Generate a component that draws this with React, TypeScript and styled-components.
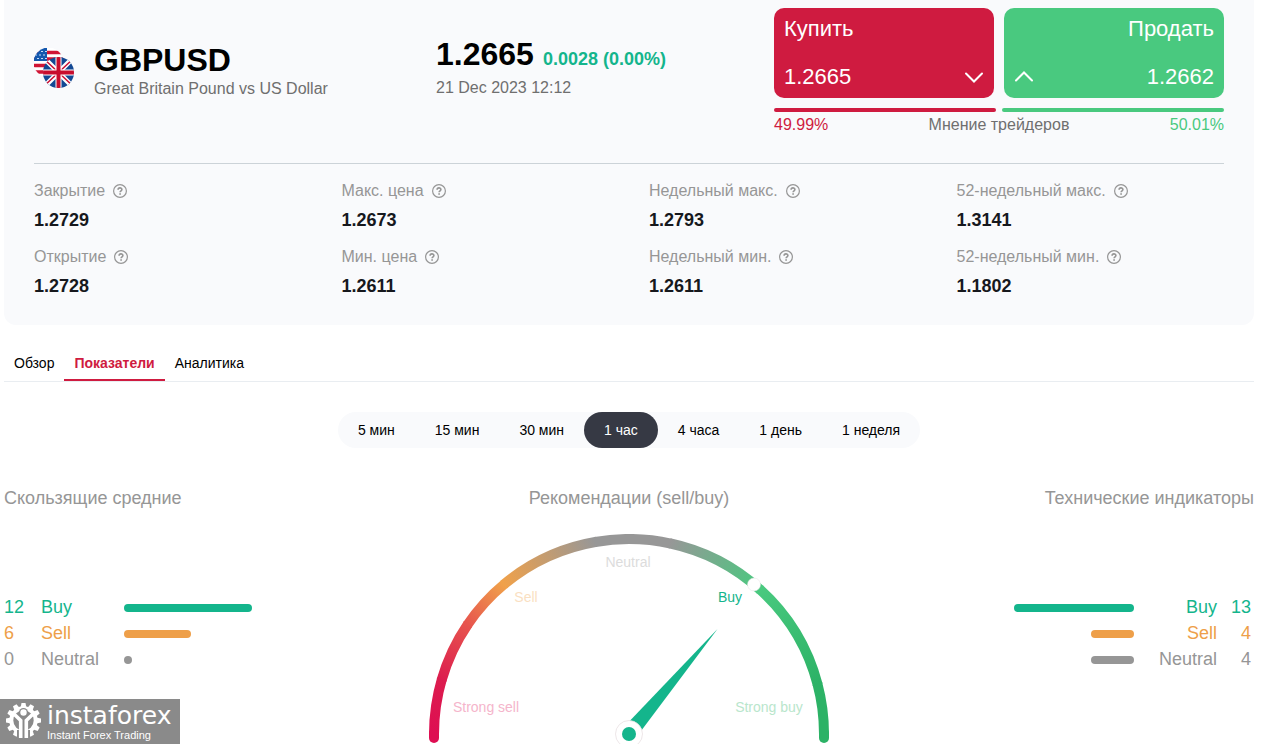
import React, { useState } from "react";
import styled, { createGlobalStyle } from "styled-components";

const color = {
  red: "#cf1b40",
  green: "#49c97f",
  teal: "#14b58c",
  orange: "#ee9f49",
  grey: "#969696",
  text: "#6f6f6f",
  panel: "#f9fafc",
  dark: "#363944",
};

const GlobalStyle = createGlobalStyle`
  * { box-sizing: border-box; }
  body {
    margin: 0;
    background: #fff;
    color: #000;
    font-family: "Liberation Sans", Arial, sans-serif;
    font-size: 16px;
    line-height: 20px;
  }
  button { font: inherit; color: inherit; background: none; border: 0; padding: 0; cursor: pointer; }
  h1, h2, p, dl, dd { margin: 0; font-weight: 400; }
`;

const Page = styled.main`
  padding: 0 8px 0 4px;
`;

const Card = styled.section`
  padding: 8px 30px 28px;
  background: ${color.panel};
  border-radius: 0 0 12px 12px;
`;

const Header = styled.header`
  display: grid;
  grid-template-columns: 402px 1fr 450px;
  padding-bottom: 28px;
  border-bottom: 1px solid #ccd3d8;
`;

const Instrument = styled.div`
  display: flex;
  gap: 20px;
  padding-top: 34px;
`;

const FlagPair = styled.svg`
  width: 40px;
  height: 40px;
  margin-top: 6px;
`;

const Symbol = styled.h1`
  margin-bottom: 1px;
  font-size: 32px;
  line-height: 36px;
  font-weight: 700;
`;

const Muted = styled.p`
  color: ${color.text};
`;

const Quote = styled.div`
  padding-top: 28px;
`;

const PriceLine = styled.div`
  display: flex;
  align-items: baseline;
  gap: 9px;
  margin-bottom: 6px;
`;

const Price = styled.strong`
  font-size: 32px;
  line-height: 36px;
`;

const Change = styled.strong`
  font-size: 18px;
  color: ${color.teal};
`;

const DealButtons = styled.div`
  display: grid;
  grid-template-columns: 1fr 1fr;
  gap: 10px;
`;

const DealButton = styled.button<{ $sell?: boolean }>`
  display: flex;
  flex-direction: column;
  justify-content: space-between;
  align-items: ${(p) => (p.$sell ? "flex-end" : "flex-start")};
  height: 90px;
  padding: 8px 10px;
  border-radius: 10px;
  background: ${(p) => (p.$sell ? color.green : color.red)};
  color: #fff;
  font-size: 22px;
  line-height: 26px;
`;

const DealRow = styled.span`
  display: flex;
  width: 100%;
  justify-content: space-between;
  align-items: center;
`;

const Chevron = styled.svg`
  width: 20px;
  height: 12px;
  fill: none;
  stroke: #fff;
  stroke-width: 2;
  stroke-linecap: round;
`;

const OpinionBars = styled.div`
  display: flex;
  gap: 6px;
  margin: 10px 0 3px;
`;

const OpinionBar = styled.span<{ $share: number; $tone: string }>`
  flex: ${(p) => p.$share} 1 0;
  height: 4px;
  border-radius: 2px;
  background: ${(p) => p.$tone};
`;

const OpinionText = styled.div`
  display: flex;
  justify-content: space-between;
  color: ${color.text};
`;

const Tone = styled.span<{ $tone: string }>`
  color: ${(p) => p.$tone};
`;

const Stats = styled.dl`
  display: grid;
  grid-template-columns: repeat(4, 1fr);
  gap: 16px 40px;
  padding-top: 17px;
`;

const StatLabel = styled.dt`
  display: flex;
  align-items: center;
  gap: 8px;
  margin-bottom: 8px;
  color: ${color.grey};
`;

const StatValue = styled.dd`
  font-size: 18px;
  line-height: 22px;
  font-weight: 700;
  color: #16181d;
`;

const HintButton = styled.button`
  display: flex;
`;

const Tabs = styled.nav`
  display: flex;
  margin-top: 21px;
  border-bottom: 1px solid #e9edf1;
`;

const Tab = styled.button<{ $active: boolean }>`
  height: 35px;
  padding: 0 10px;
  border-bottom: 2px solid ${(p) => (p.$active ? color.red : "transparent")};
  color: ${(p) => (p.$active ? color.red : "#000")};
  font-size: 14px;
  font-weight: ${(p) => (p.$active ? 700 : 400)};
`;

const Periods = styled.div`
  display: flex;
  width: fit-content;
  margin: 30px auto 38px;
  border-radius: 18px;
  background: ${color.panel};
`;

const Period = styled.button<{ $active: boolean }>`
  height: 36px;
  padding: 0 20px;
  border-radius: 18px;
  background: ${(p) => (p.$active ? color.dark : "transparent")};
  color: ${(p) => (p.$active ? "#fff" : "#000")};
  font-size: 14px;
`;

const Indicators = styled.div`
  display: grid;
  grid-template-columns: 1fr 400px 1fr;
`;

const Column = styled.section<{ $align: "start" | "center" | "end" }>`
  display: flex;
  flex-direction: column;
  align-items: ${(p) => p.$align};
`;

const Heading = styled.h2`
  font-size: 18px;
  line-height: 24px;
  color: ${color.grey};
`;

const SignalTable = styled.table`
  margin-top: 84px;
  border-collapse: collapse;
  font-size: 18px;
  line-height: 26px;
`;

const SignalRow = styled.tr<{ $tone: string }>`
  color: ${(p) => p.$tone};
`;

const Cell = styled.td<{ $width: number; $right?: boolean }>`
  width: ${(p) => p.$width}px;
  padding: 0;
  text-align: ${(p) => (p.$right ? "right" : "left")};
`;

const EndCell = styled(Cell)`
  padding-right: 3px;
`;

const SignalBar = styled.span`
  display: block;
  height: 8px;
  margin-top: 2px;
  border-radius: 4px;
  background: currentColor;
`;

const RightBar = styled(SignalBar)`
  margin-left: auto;
`;

const Gauge = styled.svg`
  display: block;
  width: 400px;
  height: 210px;
  margin-top: 24px;
  font-size: 14px;
  text-anchor: middle;
`;

const Brand = styled.a`
  position: fixed;
  left: 0;
  bottom: 0;
  display: flex;
  gap: 6px;
  width: 180px;
  height: 45px;
  padding: 4px 0 0 6px;
  background: #8a8a8a;
  color: #fff;
  text-decoration: none;
`;

const BrandName = styled.span`
  display: block;
  font-family: "DejaVu Sans", sans-serif;
  font-size: 25px;
  line-height: 26px;
`;

const BrandLine = styled.span`
  display: block;
  font-size: 11px;
  line-height: 12px;
`;

const STATS = [
  ["Закрытие", "1.2729"],
  ["Макс. цена", "1.2673"],
  ["Недельный макс.", "1.2793"],
  ["52-недельный макс.", "1.3141"],
  ["Открытие", "1.2728"],
  ["Мин. цена", "1.2611"],
  ["Недельный мин.", "1.2611"],
  ["52-недельный мин.", "1.1802"],
];

const TABS = ["Обзор", "Показатели", "Аналитика"];
const PERIODS = ["5 мин", "15 мин", "30 мин", "1 час", "4 часа", "1 день", "1 неделя"];

type Signal = { name: string; count: number; bar: number; tone: string };

const AVERAGES: Signal[] = [
  { name: "Buy", count: 12, bar: 128, tone: color.teal },
  { name: "Sell", count: 6, bar: 67, tone: color.orange },
  { name: "Neutral", count: 0, bar: 8, tone: color.grey },
];

const TECHNICAL: Signal[] = [
  { name: "Buy", count: 13, bar: 120, tone: color.teal },
  { name: "Sell", count: 4, bar: 43, tone: color.orange },
  { name: "Neutral", count: 4, bar: 43, tone: color.grey },
];

// Arc colours by angle, measured clockwise from the left end.
const STOPS: [number, string][] = [
  [0, "#de0e52"],
  [16, "#dc1c4e"],
  [34, "#e7544e"],
  [50, "#f0a14a"],
  [80, "#979797"],
  [102, "#979797"],
  [132, "#49c97f"],
  [165, "#2cb266"],
  [180, "#2cb266"],
];

function arcPoint(angle: number) {
  const r = (angle * Math.PI) / 180;
  return [200 - 195 * Math.cos(r), 200 - 195 * Math.sin(r)];
}

// Each span between two stops is one arc, shaded along its own chord.
function ArcSegments() {
  return (
    <g fill="none" strokeWidth="10">
      <path d="M5 199V204" stroke={STOPS[0][1]} strokeLinecap="round" />
      <path d="M395 199V204" stroke={STOPS[8][1]} strokeLinecap="round" />
      {STOPS.slice(1).map(([end, to], i) => {
        const [start, from] = STOPS[i];
        const [x1, y1] = arcPoint(start);
        const [x2, y2] = arcPoint(end);
        const [x3, y3] = arcPoint(Math.min(180, end + 0.4));
        return (
          <g key={start}>
            <linearGradient id={`arc${i}`} gradientUnits="userSpaceOnUse" x1={x1} y1={y1} x2={x2} y2={y2}>
              <stop offset="0" stopColor={from} />
              <stop offset="1" stopColor={to} />
            </linearGradient>
            <path d={`M${x1} ${y1}A195 195 0 0 1 ${x3} ${y3}`} stroke={`url(#arc${i})`} />
          </g>
        );
      })}
    </g>
  );
}

function Flags() {
  return (
    <FlagPair viewBox="0 0 40 40" aria-hidden="true">
      <defs>
        <clipPath id="us"><circle cx="14.500" cy="14.500" r="15" /></clipPath>
        <clipPath id="uk"><circle cx="24.500" cy="24.500" r="15.500" /></clipPath>
      </defs>
      <g clipPath="url(#us)">
        <path fill="#fff" d="M0 0h30v30H0z" />
        <path stroke="#d01535" strokeWidth="3.400" d="M0 4.500h30M0 11h30M0 17.500h30M0 24h30" />
        <path fill="#1458ae" d="M0 0h13v13H0z" />
        <path stroke="#c5dcf5" strokeWidth="1.200" strokeDasharray="2 2" d="M3 3.500h10M1 7h12M3 10.500h10" />
      </g>
      <g clipPath="url(#uk)">
        <path fill="#134893" d="M9 9h31v31H9z" />
        <path stroke="#fff" strokeWidth="5" d="M9 9l31 31M40 9L9 40" />
        <path stroke="#cc1236" strokeWidth="1.600" d="M9 10l31 29M40 10L9 39" />
        <path stroke="#fff" strokeWidth="6" d="M24.500 9v31M9 24.500h31" />
        <path stroke="#c80d2d" strokeWidth="4" d="M24.500 9v31M9 24.500h31" />
      </g>
    </FlagPair>
  );
}

function Hint({ label }: { label: string }) {
  return (
    <HintButton aria-label={label}>
      <svg width="14" height="14" viewBox="1 1 14 14" fill="none" stroke={color.grey} aria-hidden="true">
        <circle cx="8" cy="8" r="6.400" strokeWidth="1.200" />
        <path d="M6.100 6.700C6.100 4.300 9.900 4.300 9.900 6.500C9.900 7.800 8.100 7.800 8.100 9.300" strokeWidth="1.600" />
        <path d="M8.100 10.200v1.600" strokeWidth="1.700" />
      </svg>
    </HintButton>
  );
}

function GearMark() {
  const teeth = [0, 30, 60, 90, 120, 150, 210, 240, 270, 300, 330];
  return (
    <svg width="35" height="36" viewBox="0 0 35 36" aria-hidden="true">
      <g fill="#fff">
        {teeth.map((t) => (
          <path key={t} d="M15.500 0h4l1 5h-6z" transform={`rotate(${t} 17.500 17.500)`} />
        ))}
      </g>
      <circle cx="17.500" cy="17.500" r="12.200" fill="none" stroke="#fff" strokeWidth="4" />
      <path fill="#8a8a8a" d="M11 27h13v9H11z" />
      <circle cx="17.500" cy="9.500" r="4.500" fill="#8a8a8a" />
      <circle cx="17.500" cy="9.500" r="3.200" fill="#fff" />
      <path
        fill="none"
        stroke="#fff"
        strokeWidth="3.600"
        d="M8.500 11.500L14.700 17.500V35M26.500 11.500L20.300 17.500V35"
      />
    </svg>
  );
}

export default function App() {
  const [tab, setTab] = useState("Показатели");
  const [period, setPeriod] = useState("1 час");

  return (
    <>
      <GlobalStyle />
      <Page>
        <Card>
          <Header>
            <Instrument>
              <Flags />
              <div>
                <Symbol>GBPUSD</Symbol>
                <Muted>Great Britain Pound vs US Dollar</Muted>
              </div>
            </Instrument>
            <Quote>
              <PriceLine>
                <Price>1.2665</Price>
                <Change>0.0028 (0.00%)</Change>
              </PriceLine>
              <Muted>21 Dec 2023 12:12</Muted>
            </Quote>
            <div>
              <DealButtons>
                <DealButton>
                  <span>Купить</span>
                  <DealRow>
                    <span>1.2665</span>
                    <Chevron viewBox="0 0 20 12"><path d="M2 2.500l8 8 8-8" /></Chevron>
                  </DealRow>
                </DealButton>
                <DealButton $sell>
                  <span>Продать</span>
                  <DealRow>
                    <Chevron viewBox="0 0 20 12"><path d="M2 9.500l8-8 8 8" /></Chevron>
                    <span>1.2662</span>
                  </DealRow>
                </DealButton>
              </DealButtons>
              <OpinionBars>
                <OpinionBar $share={49.99} $tone={color.red} />
                <OpinionBar $share={50.01} $tone={color.green} />
              </OpinionBars>
              <OpinionText>
                <Tone $tone={color.red}>49.99%</Tone>
                <span>Мнение трейдеров</span>
                <Tone $tone={color.green}>50.01%</Tone>
              </OpinionText>
            </div>
          </Header>
          <Stats>
            {STATS.map(([label, value]) => (
              <div key={label}>
                <StatLabel>
                  {label}
                  <Hint label={label} />
                </StatLabel>
                <StatValue>{value}</StatValue>
              </div>
            ))}
          </Stats>
        </Card>

        <Tabs>
          {TABS.map((t) => (
            <Tab key={t} $active={t === tab} onClick={() => setTab(t)}>{t}</Tab>
          ))}
        </Tabs>

        <Periods>
          {PERIODS.map((p) => (
            <Period key={p} $active={p === period} onClick={() => setPeriod(p)}>{p}</Period>
          ))}
        </Periods>

        <Indicators>
          <Column $align="start">
            <Heading>Скользящие средние</Heading>
            <SignalTable>
              <tbody>
                {AVERAGES.map((s) => (
                  <SignalRow key={s.name} $tone={s.tone}>
                    <Cell $width={37}>{s.count}</Cell>
                    <Cell $width={83}>{s.name}</Cell>
                    <Cell $width={128}><SignalBar style={{ width: s.bar }} /></Cell>
                  </SignalRow>
                ))}
              </tbody>
            </SignalTable>
          </Column>

          <Column $align="center">
            <Heading>Рекомендации (sell/buy)</Heading>
            <Gauge viewBox="0 0 400 210">
              <ArcSegments />
              <text x="199" y="33" fill="#dcdcdc">Neutral</text>
              <text x="97" y="68" fill="#fadfc2">Sell</text>
              <text x="301" y="68" fill={color.teal}>Buy</text>
              <text x="57" y="178" fill="#f5b5cb">Strong sell</text>
              <text x="340" y="178" fill="#b9e6cc">Strong buy</text>
              <circle cx="325" cy="50.500" r="6.500" fill="#fff" stroke="#e4e4e4" strokeWidth="0.500" />
              <path d="M288.500 95L194 194L206 205z" fill={color.teal} />
              <circle cx="200" cy="200" r="13.500" fill="#fff" stroke="#e8e0e2" strokeWidth="0.800" />
              <circle cx="200" cy="200" r="7" fill={color.teal} />
            </Gauge>
          </Column>

          <Column $align="end">
            <Heading>Технические индикаторы</Heading>
            <SignalTable>
              <tbody>
                {TECHNICAL.map((s) => (
                  <SignalRow key={s.name} $tone={s.tone}>
                    <Cell $width={120}><RightBar style={{ width: s.bar }} /></Cell>
                    <Cell $width={83} $right>{s.name}</Cell>
                    <EndCell $width={37} $right>{s.count}</EndCell>
                  </SignalRow>
                ))}
              </tbody>
            </SignalTable>
          </Column>
        </Indicators>
      </Page>

      <Brand href="#">
        <GearMark />
        <span>
          <BrandName>instaforex</BrandName>
          <BrandLine>Instant Forex Trading</BrandLine>
        </span>
      </Brand>
    </>
  );
}
